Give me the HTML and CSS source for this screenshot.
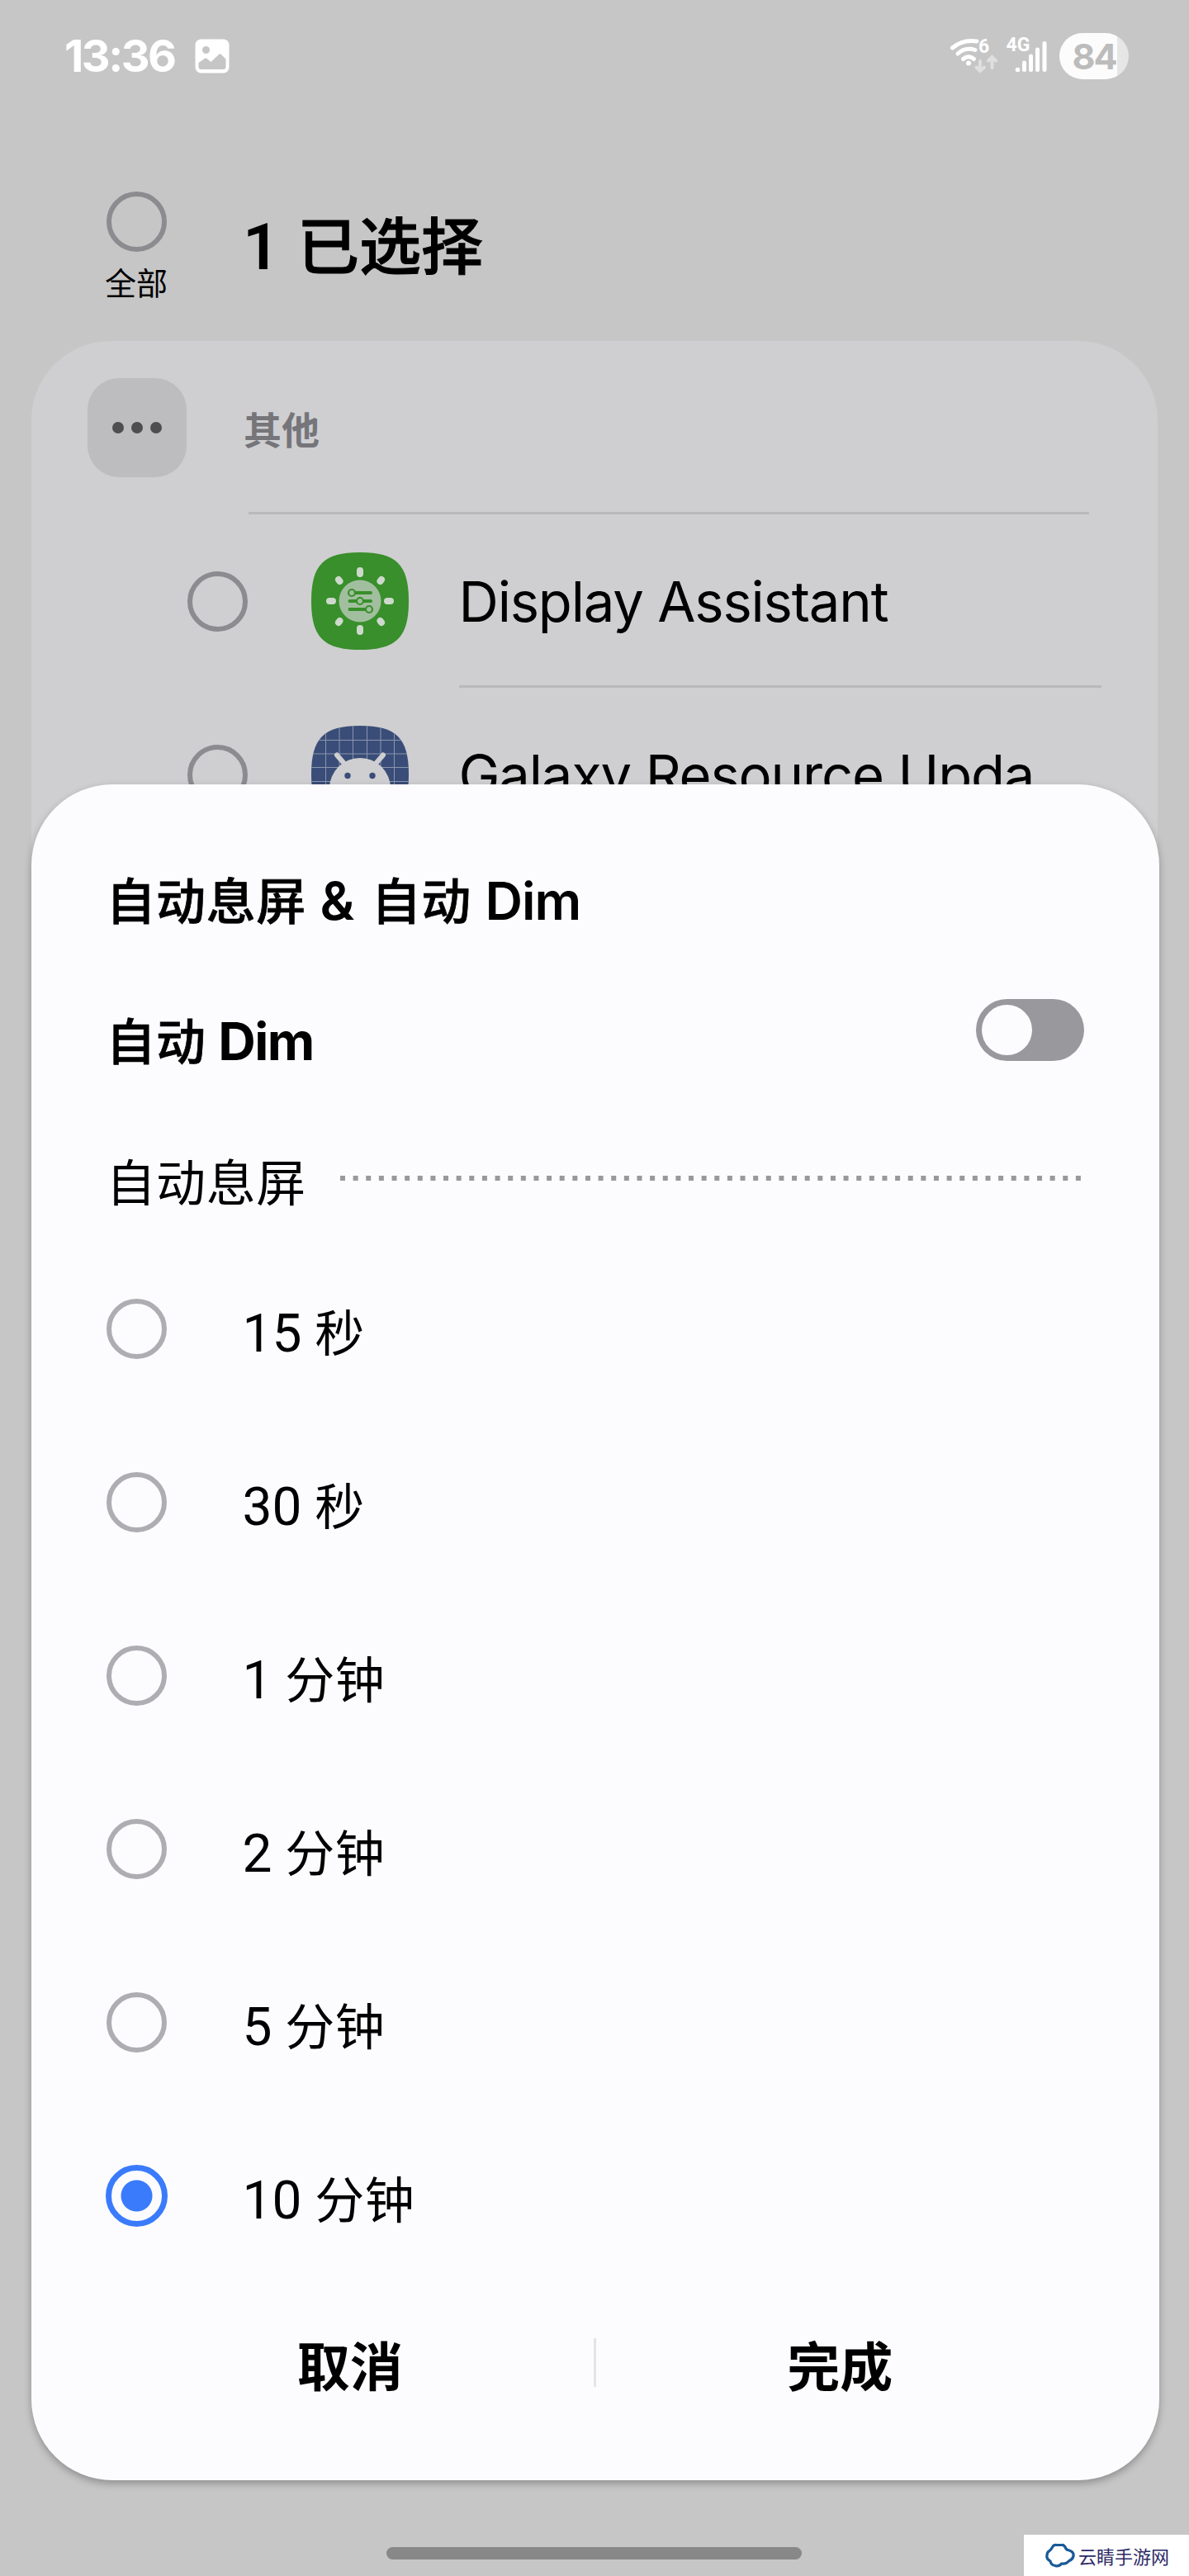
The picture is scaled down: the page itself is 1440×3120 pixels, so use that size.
FILE: index.html
```html
<!DOCTYPE html>
<html lang="zh-CN">
<head>
<meta charset="utf-8">
<title>自动息屏</title>
<link rel="stylesheet" href="styles.css">
</head>
<body>
<div class="screen">
  <header class="status">
    <span class="clock">13:36</span>
    <svg class="photo" viewBox="0 0 42 42"><rect x=".5" y=".5" width="41" height="41" rx="7" fill="#fff"/><circle cx="13.500" cy="13.500" r="4.500" fill="#c6c6c6"/><path d="M4.500 29L12.500 23.500Q13.500 23 14.500 24L19.500 28L29 19Q30.500 17.500 32 19L37.500 24.500V34Q37.500 37 34.500 37H8Q4.500 37 4.500 34Z" fill="#c6c6c6"/></svg>
    <div class="signals">
      <svg class="net" viewBox="0 0 130 60">
        <g fill="none" stroke="#fff" stroke-width="5" stroke-linecap="round">
          <path d="M3.500 20Q16 9.500 33 12"/><path d="M10 27Q19 18.500 31 22.500"/><path d="M16.500 33.500Q23 28 29.500 33.500"/>
          <path d="M90.500 38V46.500M98.500 30V46.500M106.500 22V46.500M115 14.500V46.500"/>
        </g>
        <circle cx="23" cy="38.500" r="3" fill="#fff"/><circle cx="82.500" cy="46.500" r="2.800" fill="#fff"/>
        <path d="M37 36V47M32.500 43.500L37 48L42 43.500M51.500 44V32M47 35.500L51.500 31L56 35.500" fill="none" stroke="#dfdfdf" stroke-width="4" stroke-linecap="round"/>
        <text x="35" y="25.500" class="wifi-gen">6</text>
        <text x="68.500" y="24" class="cell-gen">4G</text>
      </svg>
      <div class="battery">84</div>
    </div>
  </header>

  <div class="select-head">
    <div class="all"><i class="ring"></i><span>全部</span></div>
    <h1><span class="num">1</span>已选择</h1>
  </div>

  <section class="list">
    <div class="group">
      <div class="tile"><i></i><i></i><i></i></div>
      <span>其他</span>
    </div>
    <div class="app">
      <i class="ring"></i>
      <svg class="app-icon" viewBox="0 0 118 118">
        <path d="M59 0C103 0 118 15 118 59S103 118 59 118S0 103 0 59S15 0 59 0Z" fill="#388f2b"/>
        <g stroke="#cdd9cb" stroke-width="8" stroke-linecap="round">
          <path d="M59 22V26M59 92V96M22 59H26M92 59H96M33 33L34.500 35M85 33L83.500 35M33 85L34.500 83M85 85L83.500 83"/>
        </g>
        <circle cx="59" cy="59" r="25.500" fill="#a1bf9e"/>
        <g stroke="#388f2b" stroke-width="4" stroke-linecap="round"><path d="M49 49H72M46.500 59H72M46.500 69H70"/></g>
        <g stroke="#388f2b" stroke-width="2.200" fill="#a1bf9e"><circle cx="49" cy="49" r="4"/><circle cx="59" cy="59" r="4"/><circle cx="70" cy="69" r="4"/></g>
      </svg>
      <span class="name">Display Assistant</span>
    </div>
    <div class="app">
      <i class="ring"></i>
      <svg class="app-icon" viewBox="0 0 118 118">
        <defs><clipPath id="sq"><path d="M59 0C103 0 118 15 118 59S103 118 59 118S0 103 0 59S15 0 59 0Z"/></clipPath></defs>
        <g clip-path="url(#sq)"><rect width="118" height="118" fill="#3a4d78"/>
        <path d="M17.500 0V118M34 0V118M50.500 0V118M67.500 0V118M84 0V118M100.500 0V118M0 17.500H118M0 34H118M0 50.500H118M0 67.500H118" stroke="#8a95ad" stroke-width="1"/>
        <path d="M22 76A37 37 0 0 1 96 76Z" fill="#cfcfd1"/><path d="M31 35.500L41 47M87 35.500L77 47" stroke="#cfcfd1" stroke-width="6" stroke-linecap="round"/>
        <circle cx="44" cy="60.500" r="3.700" fill="#3a4d78"/><circle cx="74" cy="60.500" r="3.700" fill="#3a4d78"/></g>
      </svg>
      <span class="name">Galaxy Resource Upda</span>
    </div>
  </section>

  <section class="sheet">
    <h2>自动息屏 <b class="amp">&amp;</b> 自动 <b>Dim</b></h2>
    <div class="toggle-row"><h2 class="strong">自动 <b>Dim</b></h2><div class="toggle"></div></div>
    <div class="label-row"><span>自动息屏</span>
      <svg class="dots" viewBox="0 0 897 6"><path d="M0 3H897" stroke="#99989b" stroke-width="6" stroke-dasharray="6 9.630"/></svg></div>
    <div class="options">
      <div class="option"><i class="ring"></i><span>15 <em>秒</em></span></div>
      <div class="option"><i class="ring"></i><span>30 <em>秒</em></span></div>
      <div class="option"><i class="ring"></i><span>1 <em>分钟</em></span></div>
      <div class="option"><i class="ring"></i><span>2 <em>分钟</em></span></div>
      <div class="option"><i class="ring"></i><span>5 <em>分钟</em></span></div>
      <div class="option"><i class="ring checked"></i><span>10 <em>分钟</em></span></div>
    </div>
    <div class="actions"><span>取消</span><i></i><span>完成</span></div>
  </section>

  <div class="home-bar"></div>
  <div class="mark">
    <svg viewBox="0 0 36 30"><path d="M9 4.500Q10 2 14 2.500H20Q23 2 25 7Q26 8.500 29 9Q35 11 34 16Q33 20 29 21.500Q25 26 20 25Q16 29 12 27.500Q7 27 6 22Q1 19 2 15Q2 11 5 9.500Q7 8 9 4.500Z" fill="none" stroke="#1a5a98" stroke-width="3.200"/></svg>
    <span>云睛手游网</span>
  </div>
</div>
</body>
</html>
```
FILE: styles.css
```css
* { box-sizing: border-box; }
body { margin: 0; background: #c6c6c6; }
.screen {
  position: relative;
  width: 1440px;
  height: 3120px;
  overflow: hidden;
  background: #c6c6c6;
  color: #000;
  font-family: Roboto, "Noto Sans CJK SC", sans-serif;
}
h1, h2 { margin: 0; }
i, em { font-style: normal; }
svg { display: block; flex: none; }

.status { display: flex; align-items: center; height: 136px; padding: 0 73px 0 78px; color: #fff; }
.clock { width: 158px; font: 700 54px/60px Inter, sans-serif; letter-spacing: -2.500px; white-space: nowrap; }
.photo { width: 42px; height: 42px; }
.signals { display: flex; align-items: center; margin-left: auto; gap: 3px; }
.net { width: 130px; height: 60px; }
.wifi-gen, .cell-gen { fill: #fff; font: 700 23px Roboto, sans-serif; }
.battery {
  width: 84px;
  height: 56px;
  border-radius: 28px;
  background: linear-gradient(90deg, #fcfcfc 70px, #e6e6e6 70px);
  color: #bcbcbc;
  font: 700 43px/57px Inter, sans-serif;
  text-align: center;
  letter-spacing: -2px;
}

.ring { display: block; flex: none; width: 73px; height: 73px; border: 6px solid #8c8c90; border-radius: 50%; }
.select-head { display: flex; height: 277px; padding: 96px 0 0 122px; }
.all { display: flex; flex-direction: column; align-items: center; width: 86px; font-size: 38px; line-height: 56px; }
.all span { margin-top: 11px; }
.select-head h1 { margin: 13px 0 0 86px; font-size: 75px; line-height: 110px; font-weight: 500; white-space: nowrap; -webkit-text-stroke: 1px #000; }
.num { display: inline-block; width: 66px; font-size: 78px; line-height: 1; font-weight: 600; -webkit-text-stroke: 0; }

.list { height: 700px; margin: 0 38px; border-radius: 96px 96px 0 0; background: #cfcfd1; }
.group { position: relative; display: flex; align-items: center; height: 210px; padding: 0 0 0 68px; color: #75757a; font-size: 46px; font-weight: 700; }
.group > span { margin: 0 0 1px 69px; }
.group::after, .app:not(:last-child)::after { content: ""; position: absolute; right: 83px; bottom: 0; left: 263px; height: 3px; background: #b9b9bb; }
.app:not(:last-child)::after { right: 68px; left: 518px; }
.tile { display: flex; align-items: center; justify-content: center; gap: 9px; width: 120px; height: 120px; border-radius: 38px; background: #bdbdbf; }
.tile i { width: 14px; height: 14px; border-radius: 50%; background: #4e4e50; }
.app { position: relative; display: flex; align-items: center; height: 210px; padding-left: 188.500px; }
.app-icon { width: 118px; height: 118px; margin-left: 77.500px; }
.name { margin: 2px 0 0 60.500px; font: 400 67px/80px Inter, sans-serif; letter-spacing: -1.200px; white-space: nowrap; }

.sheet {
  position: absolute;
  top: 950px;
  left: 37.500px;
  width: 1366px;
  height: 2054px;
  padding: 86px 91px 0;
  border-radius: 98px;
  background: #fcfcff;
  box-shadow: 0 4px 10px rgba(0, 0, 0, .28);
}
.sheet h2 { padding-left: 0; font-size: 60px; line-height: 116px; font-weight: 500; letter-spacing: .600px; white-space: nowrap; -webkit-text-stroke: .700px #000; }
.sheet h2 b { margin-left: 1px; font: 600 63px/1 Inter, sans-serif; letter-spacing: -1px; -webkit-text-stroke: 0; }
.sheet h2 .amp { margin: 0 6px 0 1px; }
.sheet .strong b { margin-left: -1px; font-weight: 700; font-size: 63px; letter-spacing: -1.500px; }
.toggle-row { display: flex; height: 157px; align-items: flex-start; justify-content: space-between; margin-top: 54px; }
.toggle { width: 131px; height: 75px; margin-top: 4px; padding: 7px; border-radius: 38px; background: #99989d; }
.toggle::before { content: ""; display: block; width: 61px; height: 61px; border-radius: 50%; background: #fcfcff; }
.label-row { display: flex; align-items: center; height: 128px; font-size: 60px; letter-spacing: .600px; }
.label-row span { margin-top: 2px; }
.dots { width: 897px; height: 6px; margin-left: 41px; }
.options { margin-top: 13px; }
.option { display: flex; align-items: center; height: 210px; font-size: 64px; line-height: 100px; }
.option .ring { border-color: #aeaeb2; }
.option .checked { width: 75px; height: 75px; margin: 0 -1px; border: 7px solid #3a7bfb; background: radial-gradient(circle, #3a7bfb 18.500px, #fcfcff 19.500px); }
.option > span { margin: 13px 0 0 92px; white-space: nowrap; }
.option em { font-size: 60px; line-height: 1; letter-spacing: .500px; }
.actions { display: flex; align-items: center; height: 167px; padding-top: 27px; font-size: 64px; font-weight: 700; }
.actions span { flex: 1; margin-top: 2px; text-align: center; }
.actions i { width: 3px; height: 59px; background: #e4e4e7; }

.home-bar { position: absolute; top: 3085px; left: 468px; width: 503px; height: 15px; border-radius: 8px; background: #888; }
.mark { position: absolute; right: 0; bottom: 0; display: flex; align-items: center; width: 200px; height: 50px; padding-left: 26px; background: #fff; color: #2c2a66; font-size: 22px; }
.mark svg { width: 36px; height: 30px; margin-right: 4px; }
```
